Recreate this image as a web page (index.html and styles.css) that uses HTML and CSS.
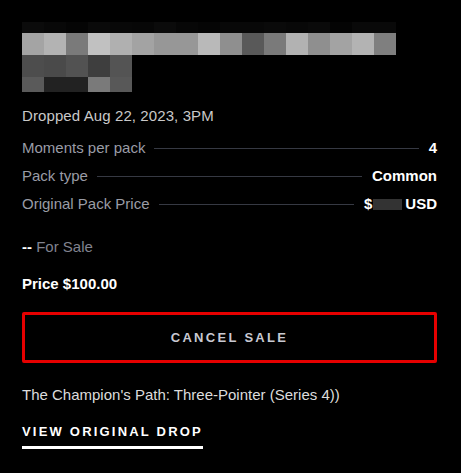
FILE: index.html
```html
<!DOCTYPE html>
<html lang="en">
<head>
    <meta charset="UTF-8">
    <meta name="viewport" content="width=device-width, initial-scale=1.0">
    <title>Pack Listing</title>
    <link rel="stylesheet" href="styles.css">
</head>
<body>
    <div class="panel">
        <!-- title is pixelated in the source -->
        <div class="blur-title">
            <div class="blur-row strip">
                <span style="background:#0b0b0b"></span><span style="background:#080808"></span><span style="background:#050505"></span><span style="background:#0a0a0a"></span><span style="background:#080808"></span><span style="background:#070707"></span><span style="background:#0b0b0b"></span><span style="background:#070707"></span><span style="background:#050505"></span><span style="background:#080808"></span><span style="background:#080808"></span><span style="background:#0a0a0a"></span><span style="background:#080808"></span><span style="background:#0a0a0a"></span><span style="background:#040404"></span><span style="background:#090909"></span><span style="background:#090909"></span>
            </div>
            <div class="blur-row">
                <span style="background:#a4a4a4"></span><span style="background:#b3b3b3"></span><span style="background:#7a7a7a"></span><span style="background:#c1c1c1"></span><span style="background:#b0b0b0"></span><span style="background:#a3a3a3"></span><span style="background:#979797"></span><span style="background:#979797"></span><span style="background:#b9b9b9"></span><span style="background:#8f8f8f"></span><span style="background:#595959"></span><span style="background:#7a7a7a"></span><span style="background:#b2b2b2"></span><span style="background:#8f8f8f"></span><span style="background:#a3a3a3"></span><span style="background:#b3b3b3"></span><span style="background:#7f7f7f"></span>
            </div>
            <div class="blur-row">
                <span style="background:#4d4d4d"></span><span style="background:#4a4a4a"></span><span style="background:#525252"></span><span style="background:#3e3e3e"></span><span style="background:#545454"></span>
            </div>
            <div class="blur-row short">
                <span style="background:#5a5a5a"></span><span style="background:#222222"></span><span style="background:#222222"></span><span style="background:#7a7a7a"></span><span style="background:#585858"></span>
            </div>
        </div>

        <p class="dropped">Dropped Aug 22, 2023, 3PM</p>

        <dl class="details">
            <div class="detail-row">
                <dt>Moments per pack</dt>
                <dd>4</dd>
            </div>
            <div class="detail-row">
                <dt>Pack type</dt>
                <dd>Common</dd>
            </div>
            <div class="detail-row">
                <dt>Original Pack Price</dt>
                <dd>$<span class="redacted"></span>USD</dd>
            </div>
        </dl>

        <p class="for-sale"><strong>--</strong> For Sale</p>

        <p class="price">Price $100.00</p>

        <button class="cancel-button">Cancel Sale</button>

        <p class="drop-name">The Champion's Path: Three-Pointer (Series 4))</p>

        <a class="drop-link" href="#">View Original Drop</a>
    </div>
</body>
</html>
```

FILE: styles.css
```css
html, body {
    background: #000;
}
body {
    margin: 0;
    font-family: "Liberation Sans", Arial, sans-serif;
    font-size: 15px;
    line-height: 16px;
    color: #fff;
}
.panel {
    padding: 22px 24px 0 22px;
}
.blur-title {
    display: flex;
    flex-direction: column;
}
.blur-row {
    display: flex;
    height: 22px;
}
.blur-row.strip {
    height: 11px;
}
.blur-row.short {
    height: 15px;
}
.blur-row span {
    width: 22px;
    height: 100%;
}
.dropped {
    margin: 16px 0 0;
    color: #c9c9c9;
    letter-spacing: 0.1px;
}
.details {
    margin: 10px 0 0;
}
.detail-row {
    display: flex;
    align-items: center;
    height: 28px;
}
.detail-row dt {
    color: #9a9ca6;
    display: flex;
    flex: 1;
    align-items: center;
}
.detail-row dt::after {
    content: "";
    flex: 1;
    height: 1px;
    background: #363943;
    margin: 0 10px 0 9px;
}
.detail-row dd {
    margin: 0;
    font-weight: bold;
    display: flex;
    align-items: center;
}
.redacted {
    display: inline-block;
    width: 29px;
    height: 11px;
    background: #333;
    margin: 0 3px 0 1px;
}
.for-sale {
    margin: 21px 0 0;
    color: #80838f;
}
.for-sale strong {
    color: #fff;
}
.price {
    margin: 21px 0 0;
    font-weight: bold;
}
.cancel-button {
    display: block;
    width: 100%;
    margin-top: 20px;
    height: 51px;
    background: #000;
    border: 3.5px solid #e60000;
    border-radius: 2px;
    color: #c8c9d2;
    font-family: inherit;
    font-size: 13px;
    font-weight: bold;
    letter-spacing: 2.3px;
    text-transform: uppercase;
}
.drop-name {
    margin: 24px 0 0;
    color: #dcdcdc;
}
.drop-link {
    display: inline-block;
    margin-top: 21px;
    padding-bottom: 6px;
    border-bottom: 3px solid #fff;
    color: #fff;
    text-decoration: none;
    font-size: 13px;
    font-weight: bold;
    letter-spacing: 2.2px;
    text-transform: uppercase;
}
```
